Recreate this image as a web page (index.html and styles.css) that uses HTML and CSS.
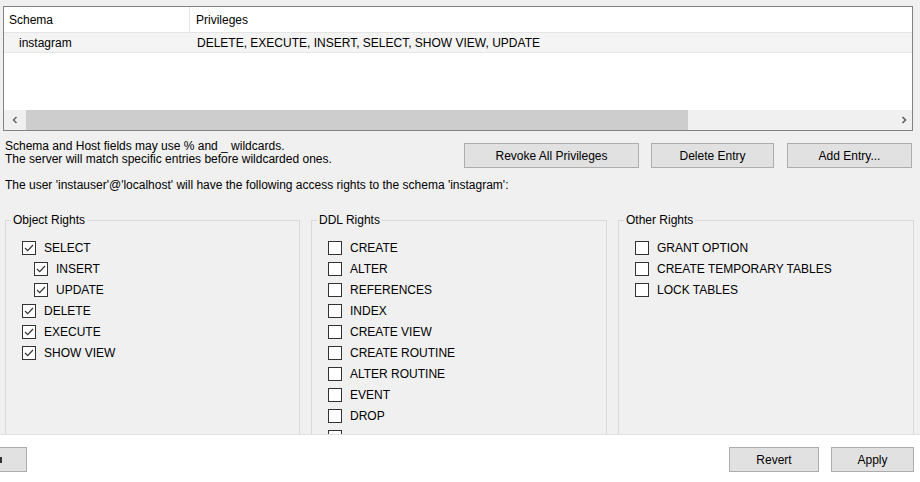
FILE: index.html
```html
<!DOCTYPE html>
<html>
<head>
<meta charset="utf-8">
<link rel="stylesheet" href="styles.css">
</head>
<body>
<div class="page">
  <div class="main">
    <div class="grid">
      <div class="grid-head">
        <div class="hcell c-schema">Schema</div>
        <div class="hcell c-priv">Privileges</div>
      </div>
      <div class="grid-row">
        <div class="rcell c-schema">instagram</div>
        <div class="rcell c-priv">DELETE, EXECUTE, INSERT, SELECT, SHOW VIEW, UPDATE</div>
      </div>
      <div class="spacer"></div>
      <div class="hscroll">
        <div class="sarrow left"><svg width="8" height="8" viewBox="0 0 8 8"><path d="M5.5 1 L2.5 4 L5.5 7" fill="none" stroke="#606060" stroke-width="1.4"/></svg></div>
        <div class="thumb"></div>
        <div class="track"></div>
        <div class="sarrow right"><svg width="8" height="8" viewBox="0 0 8 8"><path d="M2.5 1 L5.5 4 L2.5 7" fill="none" stroke="#606060" stroke-width="1.6"/></svg></div>
      </div>
    </div>

    <div class="hint">
      <div class="hint-text">
        <div>Schema and Host fields may use % and _ wildcards.</div>
        <div>The server will match specific entries before wildcarded ones.</div>
      </div>
      <div class="hint-buttons">
        <button class="btn w-revoke">Revoke All Privileges</button>
        <button class="btn w-delete">Delete Entry</button>
        <button class="btn w-add">Add Entry...</button>
      </div>
    </div>

    <div class="user-line">The user 'instauser'@'localhost' will have the following access rights to the schema 'instagram':</div>

    <div class="groups">
      <fieldset class="group">
        <legend>Object Rights</legend>
        <div class="items">
          <label class="cb"><span class="box"><svg width="12" height="12" viewBox="0 0 12 12"><path d="M2 6 L4.7 8.7 L10 3" fill="none" stroke="#333" stroke-width="1.2"/></svg></span>SELECT</label>
          <label class="cb sub"><span class="box"><svg width="12" height="12" viewBox="0 0 12 12"><path d="M2 6 L4.7 8.7 L10 3" fill="none" stroke="#333" stroke-width="1.2"/></svg></span>INSERT</label>
          <label class="cb sub"><span class="box"><svg width="12" height="12" viewBox="0 0 12 12"><path d="M2 6 L4.7 8.7 L10 3" fill="none" stroke="#333" stroke-width="1.2"/></svg></span>UPDATE</label>
          <label class="cb"><span class="box"><svg width="12" height="12" viewBox="0 0 12 12"><path d="M2 6 L4.7 8.7 L10 3" fill="none" stroke="#333" stroke-width="1.2"/></svg></span>DELETE</label>
          <label class="cb"><span class="box"><svg width="12" height="12" viewBox="0 0 12 12"><path d="M2 6 L4.7 8.7 L10 3" fill="none" stroke="#333" stroke-width="1.2"/></svg></span>EXECUTE</label>
          <label class="cb"><span class="box"><svg width="12" height="12" viewBox="0 0 12 12"><path d="M2 6 L4.7 8.7 L10 3" fill="none" stroke="#333" stroke-width="1.2"/></svg></span>SHOW VIEW</label>
        </div>
      </fieldset>
      <fieldset class="group">
        <legend>DDL Rights</legend>
        <div class="items">
          <label class="cb"><span class="box"></span>CREATE</label>
          <label class="cb"><span class="box"></span>ALTER</label>
          <label class="cb"><span class="box"></span>REFERENCES</label>
          <label class="cb"><span class="box"></span>INDEX</label>
          <label class="cb"><span class="box"></span>CREATE VIEW</label>
          <label class="cb"><span class="box"></span>CREATE ROUTINE</label>
          <label class="cb"><span class="box"></span>ALTER ROUTINE</label>
          <label class="cb"><span class="box"></span>EVENT</label>
          <label class="cb"><span class="box"></span>DROP</label>
          <div class="cb"><span class="box"></span></div>
        </div>
      </fieldset>
      <fieldset class="group">
        <legend>Other Rights</legend>
        <div class="items">
          <label class="cb"><span class="box"></span>GRANT OPTION</label>
          <label class="cb"><span class="box"></span>CREATE TEMPORARY TABLES</label>
          <label class="cb"><span class="box"></span>LOCK TABLES</label>
        </div>
      </fieldset>
    </div>
  </div>

  <div class="bottom">
    <button class="btn w-left"><span class="cut-mark"></span></button>
    <div class="bottom-spacer"></div>
    <button class="btn w-revert">Revert</button>
    <button class="btn w-apply">Apply</button>
  </div>
</div>
</body>
</html>
```

FILE: styles.css
```css
* { box-sizing: border-box; }

body {
  margin: 0;
  background: #f0f0f0;
  font-family: "Liberation Sans", Arial, sans-serif;
  font-size: 12px;
  line-height: 14px;
  color: #000;
}

.page {
  height: 482px;
  display: flex;
  flex-direction: column;
  overflow: hidden;
}

.main {
  flex: 1;
  min-height: 0;
  overflow: hidden;
  padding: 6px 7px 0 3px;
  display: flex;
  flex-direction: column;
}

/* table */
.grid {
  flex: none;
  height: 125px;
  border: 1px solid #828282;
  background: #fff;
  display: flex;
  flex-direction: column;
}

.grid-head {
  height: 26px;
  display: flex;
  border-bottom: 1px solid #e5e5e5;
}

.hcell {
  display: flex;
  align-items: center;
}

.hcell.c-schema {
  width: 186px;
  padding-left: 5px;
  border-right: 1px solid #e5e5e5;
}

.hcell.c-priv { padding-left: 6px; }

.grid-row {
  height: 20px;
  display: flex;
  align-items: center;
  background: #f4f4f4;
  border-bottom: 1px solid #e6e6e6;
}

.rcell.c-schema { width: 186px; padding-left: 15px; }
.rcell.c-priv { padding-left: 7px; }

.spacer { flex: 1; }

.hscroll {
  height: 20px;
  display: flex;
  background: #f0f0f0;
}

.sarrow {
  display: flex;
  align-items: center;
  justify-content: center;
}
.sarrow.left { width: 22px; }
.sarrow.right { width: 17px; }

.thumb {
  width: 662px;
  background: #cdcdcd;
}

.track { flex: 1; }

/* hint */
.hint {
  margin-top: 9px;
  display: flex;
  justify-content: space-between;
  align-items: flex-start;
}

.hint-text {
  padding-left: 2px;
  line-height: 13px;
}

.hint-buttons {
  margin-top: 3px;
  display: flex;
  gap: 12px;
  margin-right: 1px;
}

.btn {
  height: 25px;
  background: #e1e1e1;
  border: 1px solid #adadad;
  font-family: inherit;
  font-size: 12px;
  color: #000;
  padding: 0;
  border-radius: 0;
}

.w-revoke { width: 175px; }
.w-delete { width: 123px; }
.w-add { width: 125px; margin-left: 1px; }

.user-line {
  margin-top: 10px;
  padding-left: 2px;
}

/* groups */
.groups {
  margin-top: 21px;
  padding-left: 2px;
  display: grid;
  grid-template-columns: 295px 296px 296px;
  column-gap: 11px;
}

.group {
  margin: 0;
  min-width: 0;
  height: 260px;
  padding: 0 0 0 16px;
  border: 1px solid #d9d9d9;
}

.group legend {
  padding: 0 2px;
  margin-left: -11px;
  line-height: 14px;
}

.items { padding-top: 10px; }

.cb {
  display: flex;
  align-items: center;
  height: 21px;
  gap: 8px;
}

.cb.sub { margin-left: 12px; }

.box {
  width: 14px;
  height: 14px;
  flex: none;
  border: 1px solid #333;
  background: #fff;
  display: flex;
  align-items: center;
  justify-content: center;
}

/* bottom bar */
.bottom {
  flex: none;
  height: 48px;
  background: #fff;
  border-top: 1px solid #e3e3e3;
  display: flex;
  align-items: flex-start;
  padding: 12px 6px 0 0;
  gap: 12px;
}

.bottom-spacer { flex: 1; }

.w-left {
  width: 94px;
  margin-left: -67px;
  position: relative;
}

.cut-mark {
  position: absolute;
  left: 66px;
  top: 9px;
  width: 2px;
  height: 6px;
  background: #333;
}

.w-revert { width: 90px; }
.w-apply { width: 83px; }
```
